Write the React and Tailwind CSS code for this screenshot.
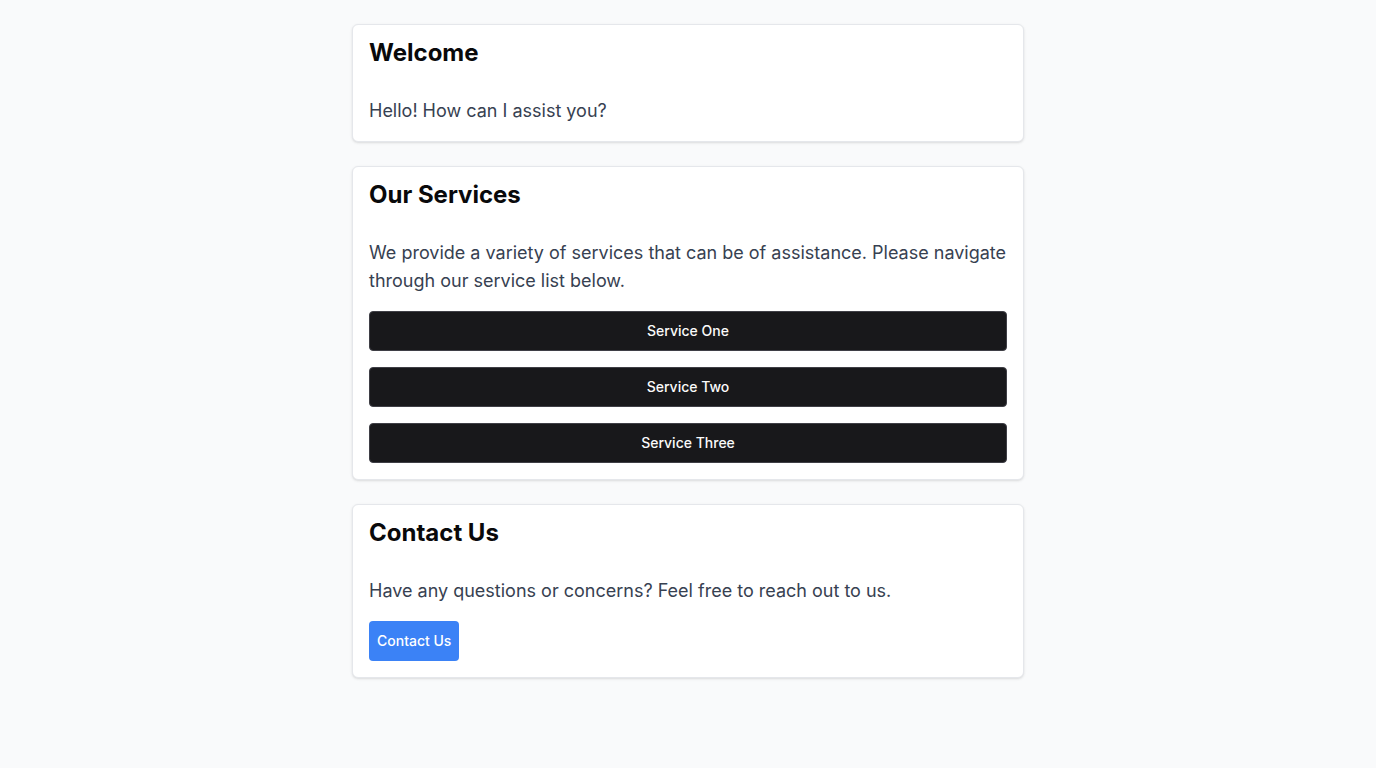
export default function App() {
  const services = ["Service One", "Service Two", "Service Three"];

  return (
    <div className="min-h-screen bg-[#f9fafb] font-['Inter',sans-serif]">
      <div className="mx-auto max-w-2xl pt-6 space-y-6">
        {/* Welcome */}
        <div className="bg-white border border-[#e5e7eb] rounded-md shadow-sm p-4">
          <h2 className="text-2xl leading-6 font-bold text-[#09090b] mb-8">Welcome</h2>
          <p className="text-lg text-[#374151]">Hello! How can I assist you?</p>
        </div>

        {/* Services */}
        <div className="bg-white border border-[#e5e7eb] rounded-md shadow-sm p-4">
          <h2 className="text-2xl leading-6 font-bold text-[#09090b] mb-8">Our Services</h2>
          <p className="text-lg text-[#374151] leading-7">
            We provide a variety of services that can be of assistance. Please navigate through our service list below.
          </p>
          <div className="mt-4 space-y-4">
            {services.map((s) => (
              <button
                key={s}
                className="w-full h-10 flex items-center justify-center bg-[#18181b] border border-[#3f3f46] rounded text-sm font-medium text-[#fafafa]"
              >
                {s}
              </button>
            ))}
          </div>
        </div>

        {/* Contact */}
        <div className="bg-white border border-[#e5e7eb] rounded-md shadow-sm p-4">
          <h2 className="text-2xl leading-6 font-bold text-[#09090b] mb-8">Contact Us</h2>
          <p className="text-lg text-[#374151]">Have any questions or concerns? Feel free to reach out to us.</p>
          <button className="mt-4 h-10 px-2 bg-[#3b82f6] rounded text-sm font-medium text-white">
            Contact Us
          </button>
        </div>
      </div>
    </div>
  );
}
